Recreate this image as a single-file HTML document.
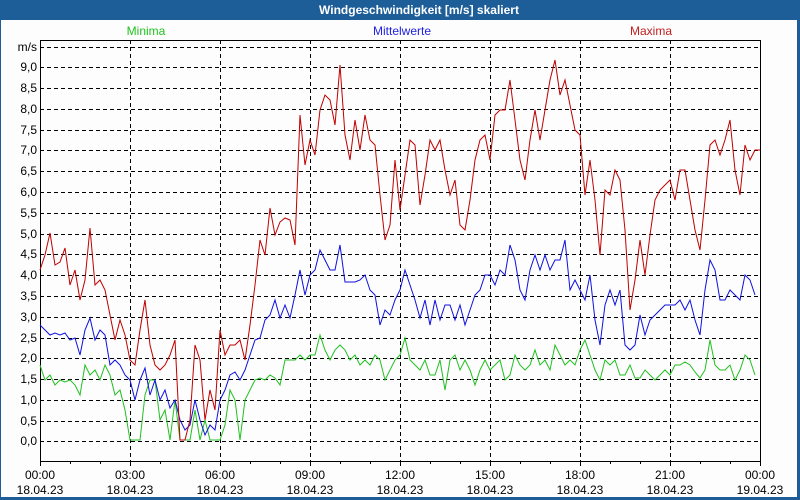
<!DOCTYPE html>
<html><head><meta charset="utf-8"><style>
html,body{margin:0;padding:0;width:800px;height:500px;overflow:hidden;background:#1d5e98}
svg{display:block}
text{font-family:"Liberation Sans",sans-serif;font-size:12px}
</style></head><body>
<svg width="800" height="500" xmlns="http://www.w3.org/2000/svg">
<rect x="0" y="0" width="800" height="500" fill="#1d5e98"/>
<rect x="1" y="20" width="796" height="477" fill="#fcfdfc"/>
<text x="419" y="14" text-anchor="middle" fill="#fff" font-weight="bold" style="font-size:12px">Windgeschwindigkeit [m/s] skaliert</text>
<text x="146" y="35" text-anchor="middle" fill="#22c022">Minima</text>
<text x="402" y="35" text-anchor="middle" fill="#2020e0">Mittelwerte</text>
<text x="651" y="35" text-anchor="middle" fill="#c02020">Maxima</text>
<g stroke="#000" stroke-width="1" stroke-dasharray="4,3" fill="none" shape-rendering="crispEdges">
<path d="M40 47.5H760M40 67.5H760M40 88.5H760M40 109.5H760M40 130.5H760M40 150.5H760M40 171.5H760M40 192.5H760M40 213.5H760M40 234.5H760M40 254.5H760M40 275.5H760M40 296.5H760M40 317.5H760M40 338.5H760M40 358.5H760M40 379.5H760M40 400.5H760M40 421.5H760M40 441.5H760"/>
<path d="M130.5 40V461M220.5 40V461M310.5 40V461M400.5 40V461M490.5 40V461M580.5 40V461M670.5 40V461"/>
</g>
<rect x="40.5" y="40.5" width="720" height="421" fill="none" stroke="#000" shape-rendering="crispEdges"/>
<g stroke="#000" shape-rendering="crispEdges"><path d="M40.5 461V466M70.5 461V464M100.5 461V464M130.5 461V466M160.5 461V464M190.5 461V464M220.5 461V466M250.5 461V464M280.5 461V464M310.5 461V466M340.5 461V464M370.5 461V464M400.5 461V466M430.5 461V464M460.5 461V464M490.5 461V466M520.5 461V464M550.5 461V464M580.5 461V466M610.5 461V464M640.5 461V464M670.5 461V466M700.5 461V464M730.5 461V464M760.5 461V466"/></g>
<g text-anchor="end" fill="#000">
<text x="37" y="51">m/s</text><text x="37" y="71">9,0</text><text x="37" y="92">8,5</text><text x="37" y="113">8,0</text><text x="37" y="134">7,5</text><text x="37" y="154">7,0</text><text x="37" y="175">6,5</text><text x="37" y="196">6,0</text><text x="37" y="217">5,5</text><text x="37" y="238">5,0</text><text x="37" y="258">4,5</text><text x="37" y="279">4,0</text><text x="37" y="300">3,5</text><text x="37" y="321">3,0</text><text x="37" y="342">2,5</text><text x="37" y="362">2,0</text><text x="37" y="383">1,5</text><text x="37" y="404">1,0</text><text x="37" y="425">0,5</text><text x="37" y="445">0,0</text>
</g>
<g text-anchor="middle" fill="#000">
<text x="40" y="479">00:00</text><text x="40" y="494">18.04.23</text>
<text x="130" y="479">03:00</text><text x="130" y="494">18.04.23</text>
<text x="220" y="479">06:00</text><text x="220" y="494">18.04.23</text>
<text x="310" y="479">09:00</text><text x="310" y="494">18.04.23</text>
<text x="400" y="479">12:00</text><text x="400" y="494">18.04.23</text>
<text x="490" y="479">15:00</text><text x="490" y="494">18.04.23</text>
<text x="580" y="479">18:00</text><text x="580" y="494">18.04.23</text>
<text x="670" y="479">21:00</text><text x="670" y="494">18.04.23</text>
<text x="760" y="479">00:00</text><text x="760" y="494">19.04.23</text>
</g>
<g fill="none" stroke-width="1">
<polyline stroke="#22c022" points="40,365 45,380 50,375 55,385 60,380 65,382 70,380 75,385 80,395 85,365 90,375 95,370 100,380 105,365 110,375 115,395 120,390 125,410 130,440 135,440 140,440 145,395 150,380 155,380 160,420 165,410 170,440 175,400 180,440 185,440 190,440 195,410 200,440 205,420 210,440 215,440 220,440 225,425 230,390 235,400 240,440 245,400 250,390 255,380 260,378 265,380 270,375 275,378 280,385 285,360 290,360 295,360 300,355 305,360 310,355 315,355 320,335 325,350 330,360 335,350 340,345 345,350 350,360 355,355 360,365 365,360 370,365 375,355 380,360 385,380 390,370 395,360 400,355 405,338 410,360 415,365 420,370 425,360 430,375 435,375 440,360 445,390 450,360 455,355 460,370 465,360 470,370 475,385 480,370 485,360 490,370 495,365 500,360 505,380 510,375 515,355 520,365 525,370 530,365 535,350 540,365 545,360 550,370 555,345 560,355 565,365 570,360 575,365 580,350 585,340 590,355 595,370 600,380 605,360 610,365 615,360 620,375 625,375 630,365 635,378 640,378 645,370 650,375 655,380 660,375 665,370 670,375 675,365 680,365 685,362 690,365 695,372 700,378 705,370 710,340 715,365 720,370 725,370 730,365 735,380 740,370 745,355 750,360 755,375"/>
<polyline stroke="#1010e0" points="40,325 45,330 50,335 55,333 60,335 65,333 70,340 75,338 80,355 85,330 90,318 95,340 100,330 105,335 110,365 115,360 120,365 125,375 130,380 135,400 140,380 145,368 150,395 155,380 160,400 165,390 170,408 175,400 180,420 185,430 190,425 195,400 200,420 205,435 210,425 215,430 220,400 225,390 230,375 235,372 240,380 245,370 250,355 255,340 260,338 265,320 270,315 275,300 280,318 285,305 290,318 295,295 300,270 305,295 310,275 315,270 320,250 325,260 330,270 335,270 340,245 345,282 350,282 355,282 360,280 365,275 370,290 375,295 380,325 385,310 390,315 395,300 400,290 405,270 410,285 415,300 420,318 425,300 430,325 435,300 440,320 445,305 450,305 455,320 460,305 465,325 470,310 475,295 480,290 485,275 490,275 495,285 500,270 505,275 510,245 515,260 520,290 525,300 530,270 535,255 540,270 545,255 550,270 555,260 560,260 565,240 570,290 575,280 580,290 585,300 590,275 595,320 600,345 605,305 610,290 615,305 620,290 625,345 630,350 635,345 640,315 645,335 650,320 655,315 660,310 665,305 670,305 675,305 680,300 685,310 690,300 695,320 700,335 705,290 710,260 715,270 720,300 725,300 730,290 735,295 740,300 745,275 750,280 755,295"/>
<polyline stroke="#c00000" points="40,270 45,255 50,233 55,265 60,262 65,248 70,285 75,270 80,300 85,280 90,228 95,285 100,280 105,290 110,315 115,340 120,320 125,335 130,360 135,365 140,330 145,300 150,345 155,365 160,370 165,365 170,355 175,340 180,440 185,440 190,420 195,345 200,360 205,420 210,390 215,410 220,330 225,355 230,345 235,345 240,340 245,360 250,325 255,285 260,240 265,255 270,208 275,235 280,222 285,218 290,220 295,245 300,115 305,165 310,140 315,155 320,110 325,95 330,100 335,125 340,65 345,135 350,160 355,120 360,150 365,115 370,140 375,145 380,195 385,240 390,225 395,160 400,210 405,175 410,140 415,145 420,205 425,175 430,140 435,150 440,140 445,170 450,195 455,180 460,225 465,230 470,200 475,160 480,140 485,135 490,160 495,115 500,110 505,110 510,80 515,120 520,160 525,180 530,140 535,110 540,140 545,110 550,80 555,60 560,95 565,80 570,105 575,130 580,135 585,195 590,160 595,200 600,255 605,190 610,195 615,170 620,180 625,230 630,310 635,280 640,240 645,275 650,235 655,200 660,190 665,185 670,180 675,200 680,170 685,170 690,200 695,230 700,250 705,200 710,145 715,140 720,155 725,140 730,120 735,170 740,195 745,145 750,160 755,150 760,150"/>
</g>
</svg>
</body></html>
